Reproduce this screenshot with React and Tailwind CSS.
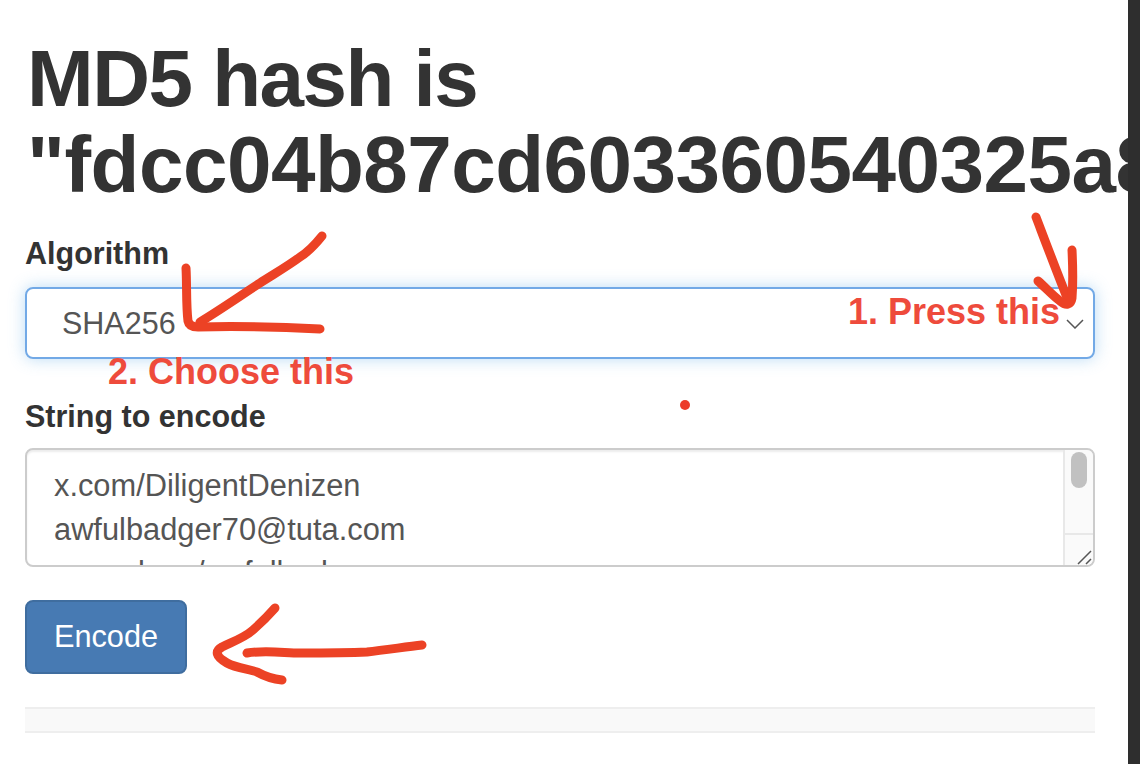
import React from "react";

const App = () => {
  return (
    <div className="relative w-[1140px] h-[764px] overflow-hidden bg-white flex font-['Liberation_Sans',Arial,sans-serif] text-[#333]">
      <div className="w-[1128px] h-full overflow-hidden pl-[25px]">
        <div className="w-[1070px]">
          <h1 className="text-[80px] leading-[86px] font-bold tracking-[-1.5px] whitespace-nowrap mt-[36px] mb-[25px] ml-[2px]">
            MD5 hash is
            <br />
            <span className="tracking-[-0.5px]">"fdcc04b87cd603360540325a8f</span>
          </h1>
          <label className="block text-[30.5px] leading-[40px] font-bold mb-[14px]">Algorithm</label>
          <div className="h-[72px] border-2 border-[#72a9e6] rounded-lg shadow-[0_0_16px_rgba(102,175,233,0.45)] flex items-center justify-between pl-[35px] pr-[9px] pt-[1px] text-[30.5px] text-[#555]">
            <span>SHA256</span>
            <svg width="18" height="10" viewBox="0 0 18 10">
              <path d="M1 1 L9 9 L17 1" fill="none" stroke="#555" strokeWidth="1.5" />
            </svg>
          </div>
          <label className="block text-[30.5px] leading-[40px] font-bold mt-[37px] mb-[12px]">String to encode</label>
          <div className="h-[119px] border-2 border-[#ccc] rounded-lg overflow-hidden flex text-[#555] shadow-[inset_0_2px_2px_rgba(0,0,0,0.075)]">
            <div className="flex-1 pl-[27px] pt-[14px] text-[30.8px] leading-[43.5px] whitespace-nowrap">
              x.com/DiligentDenizen
              <br />
              awfulbadger70@tuta.com
              <br />
              paypal.me/awfulbadger
            </div>
            <div className="w-[30px] bg-[#fafafa] border-l-2 border-[#e8e8e8] flex flex-col">
              <div className="flex-1 pt-[2px] flex justify-center">
                <div className="w-[16px] h-[36px] rounded-full bg-[#c1c1c1]" />
              </div>
              <div className="h-[32px] border-t-2 border-[#e8e8e8] flex items-end justify-end">
                <svg width="16" height="16" viewBox="0 0 16 16">
                  <path d="M1 15 L14 2 M9 15 L14 10" stroke="#555" strokeWidth="1.5" />
                </svg>
              </div>
            </div>
          </div>
          <button className="block mt-[33px] w-[162px] h-[74px] bg-[#477ab3] border-2 border-[#3f6d9f] rounded-lg text-white text-[30.7px]">
            Encode
          </button>
          <div className="mt-[33px] h-[26px] bg-[#f9f9f9] border-y-2 border-[#eeeeee]" />
        </div>
      </div>
      <div className="w-[12px] h-full bg-[#2e2e2e]" />

      {/* annotations on top of the page */}
      <span className="absolute left-[848px] top-[292px] text-[36px] leading-[40px] font-bold text-[#ee4b3c] whitespace-nowrap">
        1. Press this
      </span>
      <span className="absolute left-[108px] top-[352px] text-[36px] leading-[40px] font-bold text-[#ee4b3c] whitespace-nowrap">
        2. Choose this
      </span>
      <svg className="absolute left-0 top-0 pointer-events-none" width="1140" height="764" viewBox="0 0 1140 764" fill="none">
        <g stroke="#ec4225" strokeWidth="9" strokeLinecap="round" strokeLinejoin="round">
          <path d="M322 236 C314 246 308 252 300 257 C288 266 274 274 260 283 C240 296 220 310 200 322" />
          <path d="M186 268 C187 285 186 305 188 321 C189 326 193 327 198 327 C240 326 280 327 320 329" />
          <path d="M1036 217 C1044 238 1056 270 1068 300" />
          <path d="M1072 250 C1073 270 1073 285 1072 298 C1071 305 1066 306 1060 301 C1052 295 1046 288 1038 281" />
          <path d="M275 608 C268 616 262 622 253 630 C244 638 232 642 222 647 C215 651 215 656 227 663 C236 668 248 669 257 672 C266 677 272 679 282 680" />
          <path d="M247 653 C265 650 285 653 300 653 C325 653 345 653 367 652 C385 650 405 647 422 645" />
        </g>
        <circle cx="685" cy="405" r="5" fill="#ec3b2a" />
      </svg>
    </div>
  );
};

export default App;
